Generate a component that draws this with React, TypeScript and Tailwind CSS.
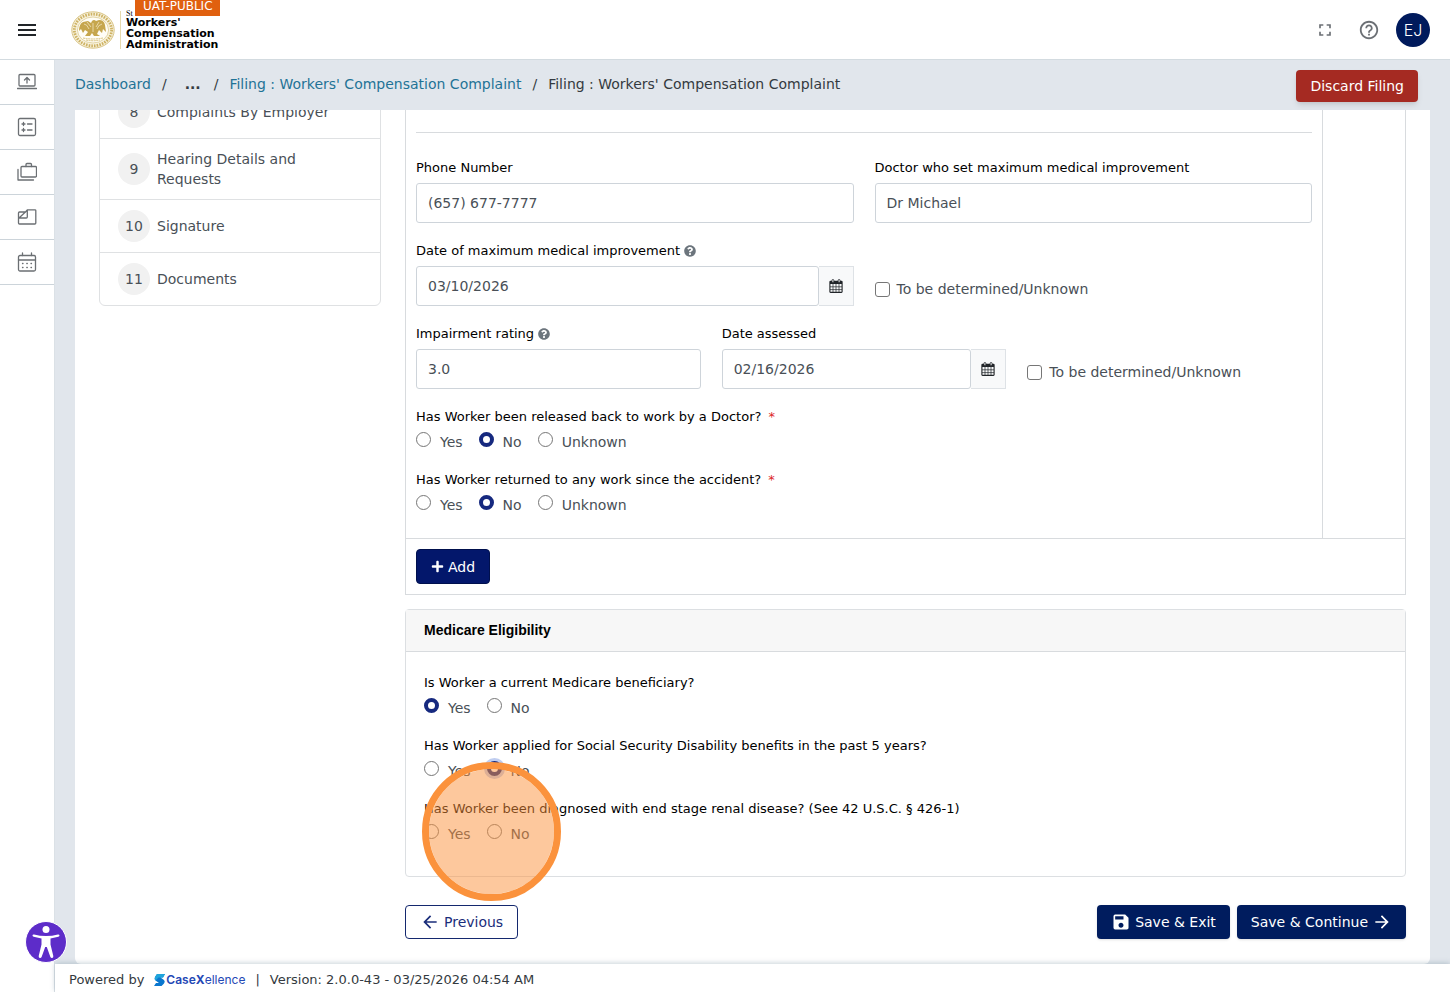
import React, { useId, useState } from 'react';
import { FaPlus, FaQuestionCircle } from 'react-icons/fa';
import { MdArrowBack, MdArrowForward, MdFullscreen, MdHelpOutline, MdMenu, MdSave } from 'react-icons/md';

// --- Types ---
interface Step {
    num: number;
    title: string;
}

interface RadioQuestionProps {
    label: string;
    options: string[];
    initial?: string;
    required?: boolean;
    focused?: string;
    children?: React.ReactNode;
}

const STEPS: Step[] = [
    { num: 8, title: "Complaints By Employer" },
    { num: 9, title: "Hearing Details and Requests" },
    { num: 10, title: "Signature" },
    { num: 11, title: "Documents" }
];

// --- Icons ---
const SIDE_ICONS: { name: string; art: React.ReactNode }[] = [
    {
        name: "File online",
        art: (
            <>
                <rect x="2" y="2.500" width="16" height="11.500" rx="1" />
                <path d="M.5 16.500h19M10 11V6M7.500 8 10 5.500 12.500 8" />
            </>
        )
    },
    {
        name: "Tasks",
        art: (
            <>
                <rect x="1.500" y="1.500" width="17" height="17" rx="1.500" />
                <path d="M10.500 7h4.500M10.500 13h4.500M5 7h3M6.500 5.500v3M5 13h3M6.500 11.500v3" />
            </>
        )
    },
    {
        name: "Cases",
        art: (
            <>
                <rect x="4" y="4.500" width="15.500" height="10.500" rx="1" />
                <path d="M9 4.500v-2q0-1 1-1h3.500q1 0 1 1v2M1 7.500V18h15.500" />
            </>
        )
    },
    {
        name: "Filings",
        art: (
            <path d="M1.500 16V6q0-1 1-1H8.500L10.500 2.800h7.500q.8 0 .8.800V16q0 1-1 1H2.500q-1 0-1-1ZM10.300 3V10q0 1-1 1H2M10 3.500 2 11" />
        )
    },
    {
        name: "Calendar",
        art: (
            <>
                <rect x="1.500" y="3.500" width="17" height="15.500" rx="1.500" />
                <path d="M1.500 8h17M5.500 1v2.500M14.500 1v2.500" />
                <path d="M5.500 11.500h.5M9.800 11.500h.5M14 11.500h.5M5.500 15.500h.5M9.800 15.500h.5M14 15.500h.5" />
            </>
        )
    }
];

const CalendarIcon = () => (
    <svg width="14" height="14" viewBox="0 0 14 14" fill="none" stroke="#212529" aria-hidden="true">
        <path d="M1 2h12v3H1z" fill="#212529" stroke="none" />
        <rect x=".9" y="2.400" width="12.200" height="11" rx=".6" strokeWidth="1.100" />
        <path d="M4 5v8.500M7 5v8.500M10 5v8.500M1 7.800h12M1 10.600h12" strokeWidth=".7" />
        <rect x="3" y=".5" width="1.800" height="3" rx=".8" fill="#f8f9fa" strokeWidth=".8" />
        <rect x="9.200" y=".5" width="1.800" height="3" rx=".8" fill="#f8f9fa" strokeWidth=".8" />
    </svg>
);

const StateSeal = () => (
    <svg width="44" height="38" viewBox="0 0 44 38" fill="none" aria-hidden="true">
        <ellipse cx="22" cy="19" rx="21.200" ry="18.200" fill="#f8f2dd" stroke="#d9c484" strokeWidth="1" />
        <ellipse cx="22" cy="19" rx="18.600" ry="15.800" stroke="#cdb264" strokeWidth="2.800" strokeDasharray="1.600 1.100" />
        <ellipse cx="22" cy="19" rx="15.600" ry="13" fill="#fffdf6" stroke="#dccb93" strokeWidth=".8" />
        <path d="M21 10q2-2 4 0l3-1q5 0 6 5l1 7-3-3-1 4-3-3-2 4 3 2h-6l-2-3-2 3h-5l3-4-3-2-2 3-2-4-2 2q0-7 4-9l5-1 3 2Z" fill="#c6a64d" />
        <path d="M13 13q3 0 5 5M31 13q-4 1-5 5M16 11l4 5M28 11l-3 5M22 12v9" stroke="#f6edcf" strokeWidth=".7" />
        <path d="M12 27q10 2 20 0M15 29q7 1.500 14 0" stroke="#d3bb72" strokeWidth=".9" strokeDasharray="2 .6" />
    </svg>
);

const AccessibilityButton = () => (
    <button type="button" aria-label="Accessibility options" className="fixed left-[25px] bottom-[29px] rounded-full">
        <svg width="42" height="42" viewBox="0 0 42 42" aria-hidden="true">
            <circle cx="21" cy="21" r="20.500" fill="#5d2cc9" stroke="#fff" />
            <circle cx="21" cy="8.600" r="3.500" fill="#fff" />
            <path
                d="M9 13.500q6 1.500 12 1.500t12-1.500q1.400-.2 1.500 1 0 1-1.200 1.300l-7.800 1.700v6l2.800 11.500q.2 1.500-1 1.900-1.300.3-1.900-1L21.800 26h-1.600l-3.600 9.900q-.6 1.300-1.900 1-1.200-.4-1-1.900l2.800-11.500v-6l-7.800-1.700q-1.200-.3-1.200-1.300.1-1.200 1.500-1Z"
                fill="#fff"
            />
        </svg>
    </button>
);

// --- Form parts ---
const inputClass =
    "h-10 w-full min-w-0 rounded-[3px] border border-[#ced4da] bg-white px-[11px] text-sm text-[#495057] focus:outline-none";

const FieldLabel = ({ htmlFor, help, children }: { htmlFor: string; help?: boolean; children: React.ReactNode }) => (
    <label htmlFor={htmlFor} className="mb-[5px] flex items-center gap-1 text-[13px] leading-5 text-black">
        {children}
        {help && <FaQuestionCircle size={12} className="text-[#6c757d]" />}
    </label>
);

const TextField = ({ label, value, help }: { label: string; value: string; help?: boolean }) => {
    const id = useId();
    return (
        <div>
            <FieldLabel htmlFor={id} help={help}>{label}</FieldLabel>
            <input id={id} type="text" defaultValue={value} className={inputClass} />
        </div>
    );
};

const DateField = ({ label, value, help }: { label: string; value: string; help?: boolean }) => {
    const id = useId();
    return (
        <div>
            <FieldLabel htmlFor={id} help={help}>{label}</FieldLabel>
            <div className="flex">
                <input id={id} type="text" defaultValue={value} className={inputClass} />
                <button
                    type="button"
                    aria-label={`Pick ${label}`}
                    className="flex h-10 w-[35px] shrink-0 items-center justify-center border border-l-0 border-[#dee2e6] bg-[#f8f9fa]"
                >
                    <CalendarIcon />
                </button>
            </div>
        </div>
    );
};

const UnknownCheckbox = () => (
    <label className="mt-[38px] flex items-center gap-[7px] self-start text-sm leading-5 text-[#495057]">
        <input type="checkbox" className="h-[15px] w-[15px] appearance-none rounded-[3px] border border-[#767676] bg-white checked:bg-[#1a2f8a]" />
        To be determined/Unknown
    </label>
);

const RadioQuestion: React.FC<RadioQuestionProps> = ({ label, options, initial, required, focused, children }) => {
    const name = useId();
    const [value, setValue] = useState(initial);

    return (
        <fieldset className="relative mb-[18px]">
            <legend className="mb-[5px] text-[13px] leading-5 text-black">
                {label}
                {required && <span className="ml-[7px] text-[#dc2626]">*</span>}
            </legend>
            <div className="flex gap-4">
                {options.map((opt) => (
                    <label key={opt} className="flex items-start gap-[9px] text-sm leading-5 text-[#495057]">
                        <input
                            type="radio"
                            name={name}
                            checked={value === opt}
                            onChange={() => setValue(opt)}
                            className={`h-[15px] w-[15px] appearance-none rounded-full border border-[#767676] bg-white checked:border-[4px] checked:border-[#16297f] ${focused === opt ? "ring-[3px] ring-[#bfcdf0]" : ""}`}
                        />
                        {opt}
                    </label>
                ))}
            </div>
            {children}
        </fieldset>
    );
};

// --- Page sections ---
const Header = () => (
    <header className="flex h-[60px] shrink-0 items-center border-b border-[#d3dbe0] bg-white pr-5 pl-[15px]">
        <button type="button" aria-label="Menu" className="text-[#212529]">
            <MdMenu size={24} />
        </button>
        <a href="#" className="relative ml-8 flex h-full items-center">
            <StateSeal />
            <div className="ml-[5px] flex h-[38px] flex-col border-l border-[#e6d9ad] pr-[2px] pl-[5px] text-black">
                <span className="h-2 font-['Liberation_Serif',serif] text-[8px] leading-[6px]">St</span>
                <span className="text-[11px] leading-[11px] font-bold">Workers'<br />Compensation<br />Administration</span>
            </div>
            <span className="absolute top-0 right-0 h-4 w-[85px] bg-[#e0600f] text-center text-xs leading-3 text-white">UAT-PUBLIC</span>
        </a>
        <div className="ml-auto flex items-center text-[#6c7075]">
            <button type="button" aria-label="Full screen"><MdFullscreen size={20} /></button>
            <button type="button" aria-label="Help" className="ml-[23px]"><MdHelpOutline size={22} /></button>
            <button type="button" className="ml-4 h-[34px] w-[34px] rounded-full bg-[#001a5c] font-[Inter,sans-serif] text-base font-light text-white">
                EJ
            </button>
        </div>
    </header>
);

const Sidebar = () => (
    <nav className="w-[55px] shrink-0 border-r border-[#dbe1e6] bg-white">
        {SIDE_ICONS.map((item) => (
            <a key={item.name} href="#" aria-label={item.name} className="flex h-[45px] items-center justify-center border-b border-[#ccd4da]">
                <svg width="20" height="20" viewBox="0 0 20 20" fill="none" stroke="#6b6f73" strokeWidth="1.300" strokeLinecap="round" strokeLinejoin="round" aria-hidden="true">
                    {item.art}
                </svg>
            </a>
        ))}
    </nav>
);

const Breadcrumbs = () => (
    <div className="flex h-[50px] shrink-0 items-center justify-between pr-8 pb-[2px] pl-5">
        <nav className="flex items-center gap-[11px] text-sm text-[#343a40]">
            <a href="#" className="text-[#1f7396]">Dashboard</a>
            <span>/</span>
            <button type="button" className="pr-[2px] pl-[7px] font-bold">...</button>
            <span>/</span>
            <a href="#" className="text-[#1f7396]">Filing : Workers' Compensation Complaint</a>
            <span>/</span>
            <span>Filing : Workers' Compensation Complaint</span>
        </nav>
        <button type="button" className="mt-[3px] h-8 rounded bg-[#a52a22] px-[14px] text-sm text-white shadow-md">
            Discard Filing
        </button>
    </div>
);

const Stepper = () => (
    <ol className="w-[282px] shrink-0 self-start rounded-md border border-[#dfe1e3]">
        {STEPS.map((step) => (
            <li key={step.num} className="border-b border-[#dfe1e3] last:border-b-0">
                <a href="#" className="flex min-h-[52px] items-center gap-[7px] py-[10px] pr-10 pl-[18px] text-sm leading-5 text-[#495057]">
                    <span className="flex h-8 w-8 shrink-0 items-center justify-center rounded-full bg-[#f1f1f1]">{step.num}</span>
                    {step.title}
                </a>
            </li>
        ))}
    </ol>
);

const MedicalPanel = () => (
    <section className="border border-[#d8dbde]">
        <div className="flex border-b border-[#d8dbde]">
            <div className="min-w-0 flex-1 border-r border-[#d8dbde] px-[10px] pt-[46px] pb-[5px]">
                <hr className="mb-[25px] border-[#d8dbde]" />
                <div className="grid grid-cols-2 gap-x-[21px] gap-y-[18px]">
                    <TextField label="Phone Number" value="(657) 677-7777" />
                    <TextField label="Doctor who set maximum medical improvement" value="Dr Michael" />
                    <DateField label="Date of maximum medical improvement" value="03/10/2026" help />
                    <UnknownCheckbox />
                </div>
                <div className="my-[18px] grid grid-cols-3 gap-x-[21px]">
                    <TextField label="Impairment rating" value="3.0" help />
                    <DateField label="Date assessed" value="02/16/2026" />
                    <UnknownCheckbox />
                </div>
                <RadioQuestion label="Has Worker been released back to work by a Doctor?" options={["Yes", "No", "Unknown"]} initial="No" required />
                <RadioQuestion label="Has Worker returned to any work since the accident?" options={["Yes", "No", "Unknown"]} initial="No" required />
            </div>
            <div className="w-[82px] shrink-0" />
        </div>
        <div className="p-[10px]">
            <button type="button" className="flex h-[35px] items-center gap-1 rounded border border-[#00104d] bg-[#03176b] px-[14px] text-sm text-white">
                <FaPlus size={13} />
                Add
            </button>
        </div>
    </section>
);

const MedicarePanel = () => (
    <section className="mt-[14px] rounded border border-[#dcdfe2]">
        <h2 className="border-b border-[#d8dbde] bg-[#f7f7f7] px-[18px] py-[10px] font-['Liberation_Sans',Arial,sans-serif] text-sm leading-[21px] font-bold text-black">
            Medicare Eligibility
        </h2>
        <div className="px-[18px] pt-[21px] pb-[14px]">
            <RadioQuestion label="Is Worker a current Medicare beneficiary?" options={["Yes", "No"]} initial="Yes" />
            <RadioQuestion label="Has Worker applied for Social Security Disability benefits in the past 5 years?" options={["Yes", "No"]} initial="No" focused="No" />
            <RadioQuestion label="Has Worker been diagnosed with end stage renal disease? (See 42 U.S.C. § 426-1)" options={["Yes", "No"]}>
                {/* Click highlight */}
                <div className="pointer-events-none absolute -top-[62px] -left-[2px] h-[139px] w-[139px] rounded-full border-[7px] border-[#fb923c] bg-[#fb923c]/50 bg-clip-padding" />
            </RadioQuestion>
        </div>
    </section>
);

const navButton = "flex h-[34px] items-center gap-1 rounded text-sm";

const Footer = () => (
    <footer className="flex h-7 shrink-0 items-center bg-white pt-1 pl-[14px] text-[13px] text-[#343a40] shadow-[0_-1px_5px_rgba(80,110,130,0.3)]">
        <span>Powered by</span>
        <a href="#" className="ml-[10px] flex items-center font-[Inter,sans-serif] text-xs text-[#2448b5]">
            <svg width="12" height="14" viewBox="0 0 12 14" aria-hidden="true">
                <path d="M3 1h8L9 4.500H6.500L10 7q1.500 1.500 0 3.500L7.500 13H0l2-3h3L1.500 7.500Q0 6 1 4Z" fill="#0a77cf" />
                <path d="M3 1h8L9 4.500H4.500L1.500 7.500Q0 6 1 4Z" fill="#20a5dc" />
            </svg>
            <span><b className="font-semibold">Case</b><b>X</b>ellence</span>
        </a>
        <span className="mx-[10px]">|</span>
        <span>Version: 2.0.0-43 - 03/25/2026 04:54 AM</span>
    </footer>
);

export default function App() {
    return (
        <div className="flex h-screen flex-col overflow-hidden bg-white font-['DejaVu_Sans',Verdana,sans-serif]">
            <Header />
            <div className="flex min-h-0 flex-1">
                <Sidebar />
                <div className="flex min-w-0 flex-1 flex-col bg-[#e1e6ec]">
                    <Breadcrumbs />
                    <main className="mr-5 ml-5 min-h-0 flex-1 overflow-hidden rounded-b-md bg-white">
                        {/* Scrolled part way down the filing */}
                        <div className="-mt-[25px] flex gap-6 px-6">
                            <Stepper />
                            <div className="min-w-0 flex-1">
                                <MedicalPanel />
                                <MedicarePanel />
                                <div className="mt-7 flex gap-[7px]">
                                    <button type="button" className={`${navButton} mr-auto border border-[#14286e] bg-white px-[14px] text-[#1a2d7a]`}>
                                        <MdArrowBack size={20} />
                                        Previous
                                    </button>
                                    <button type="button" className={`${navButton} bg-[#001c5e] px-[14px] text-white shadow`}>
                                        <MdSave size={20} />
                                        Save & Exit
                                    </button>
                                    <button type="button" className={`${navButton} bg-[#001c5e] px-[14px] text-white shadow`}>
                                        Save & Continue
                                        <MdArrowForward size={20} />
                                    </button>
                                </div>
                            </div>
                        </div>
                    </main>
                    <Footer />
                </div>
            </div>
            <AccessibilityButton />
        </div>
    );
}
